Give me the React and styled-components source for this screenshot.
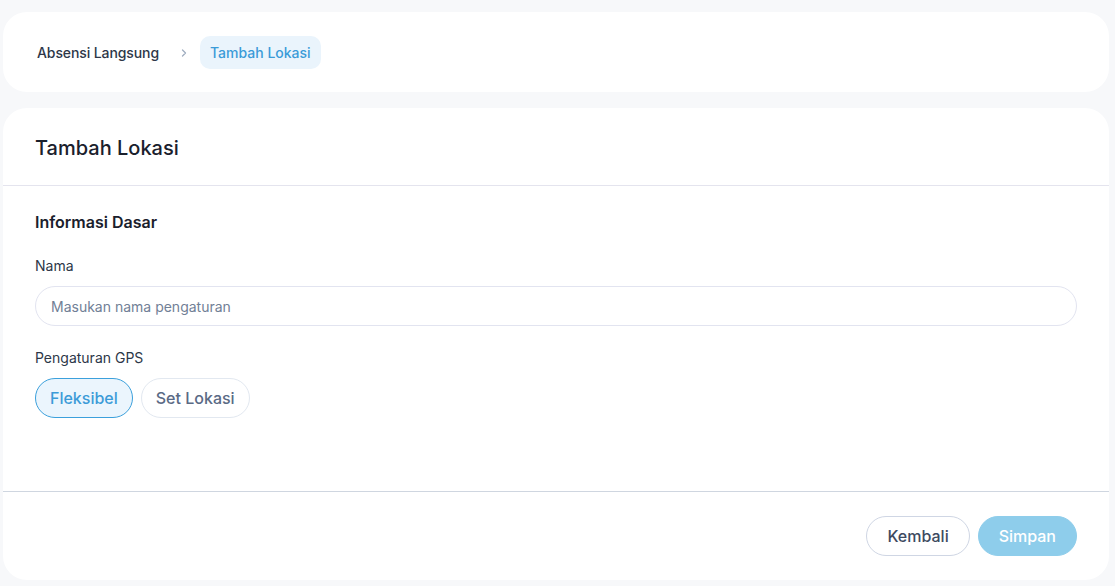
import styled, { createGlobalStyle } from "styled-components";

const GlobalStyle = createGlobalStyle`
  * { box-sizing: border-box; }
  html, body { margin: 0; padding: 0; }
  body {
    background: #f7f8fa;
    font-family: Inter, "Noto Sans", sans-serif;
    color: #1a202c;
  }
`;

export default function App() {
    return (
        <>
            <GlobalStyle />
            <Page>
                <Card>
                    <Breadcrumb>
                        <Crumb>Absensi Langsung</Crumb>
                        <Chevron viewBox="0 0 12 12">
                            <path d="M4.5 3l3 3-3 3" fill="none" stroke="#a0aec0" strokeWidth="1.3" strokeLinecap="round" strokeLinejoin="round" />
                        </Chevron>
                        <CrumbActive>Tambah Lokasi</CrumbActive>
                    </Breadcrumb>
                </Card>
                <FormCard>
                    <FormHeader>
                        <Title>Tambah Lokasi</Title>
                    </FormHeader>
                    <FormBody>
                        <SectionTitle>Informasi Dasar</SectionTitle>
                        <Field>
                            <Label>Nama</Label>
                            <Input placeholder="Masukan nama pengaturan" />
                        </Field>
                        <Field>
                            <Label>Pengaturan GPS</Label>
                            <Options>
                                <Option $active>Fleksibel</Option>
                                <Option>Set Lokasi</Option>
                            </Options>
                        </Field>
                    </FormBody>
                    <FormFooter>
                        <Button>Kembali</Button>
                        <Button $primary>Simpan</Button>
                    </FormFooter>
                </FormCard>
            </Page>
        </>
    )
}

const Page = styled.div`
    padding: 12px 6px 6px 3px;
    display: flex;
    flex-direction: column;
    gap: 16px;
`

const Card = styled.div`
    background: #ffffff;
    border-radius: 24px;
    height: 80px;
    padding: 0 34px;
    display: flex;
    align-items: center;
`

const Breadcrumb = styled.div`
    display: flex;
    align-items: center;
    gap: 10px;
    margin-top: 1px;
`

const Crumb = styled.span`
    font-size: 14px;
    font-weight: 500;
    color: #2d3748;
    letter-spacing: -0.1px;
`

const Chevron = styled.svg`
    width: 12px;
    height: 12px;
    margin-left: 9px;
`

const CrumbActive = styled.span`
    font-size: 14px;
    font-weight: 500;
    color: #3b9bd8;
    background: #eaf4fc;
    border-radius: 10px;
    padding: 7px 10px;
    line-height: 19px;
`

const FormCard = styled.div`
    background: #ffffff;
    border-radius: 24px;
    display: flex;
    flex-direction: column;
`

const FormHeader = styled.div`
    height: 78px;
    padding: 0 32px;
    display: flex;
    align-items: center;
    border-bottom: 1px solid #e4e4ee;
`

const Title = styled.h1`
    margin: 2px 0 0;
    font-size: 20px;
    font-weight: 500;
    color: #1a202c;
`

const FormBody = styled.div`
    height: 306px;
    padding: 24px 32px 0;
    display: flex;
    flex-direction: column;
    gap: 22px;
    border-bottom: 1px solid #cfd6e0;
`

const SectionTitle = styled.h2`
    margin: 0;
    font-size: 16px;
    line-height: 24px;
    font-weight: 600;
    color: #1a202c;
`

const Field = styled.div`
    display: flex;
    flex-direction: column;
    gap: 10px;
`

const Label = styled.label`
    font-size: 14px;
    line-height: 20px;
    color: #2d3748;
`

const Input = styled.input`
    width: 1042px;
    height: 40px;
    border: 1px solid #e2e4f0;
    border-radius: 20px;
    padding: 0 15px;
    font-family: inherit;
    font-size: 14px;
    color: #2d3748;
    outline: none;
    &::placeholder { color: #718096; }
`

const Options = styled.div`
    display: flex;
    gap: 8px;
`

const Option = styled.button`
    height: 40px;
    padding: 0 14px;
    border-radius: 20px;
    font-family: inherit;
    font-size: 16px;
    font-weight: 500;
    cursor: pointer;
    border: 1px solid ${p => p.$active ? "#3ba0dc" : "#e2e8f0"};
    background: ${p => p.$active ? "#ebf5fd" : "#ffffff"};
    color: ${p => p.$active ? "#3b9bd8" : "#5a6a85"};
`

const FormFooter = styled.div`
    height: 88px;
    padding: 24px 32px 0;
    display: flex;
    justify-content: flex-end;
    gap: 8px;
`

const Button = styled.button`
    height: 40px;
    padding: 0 20px;
    border-radius: 20px;
    font-family: inherit;
    font-size: 16px;
    font-weight: 500;
    cursor: pointer;
    border: 1px solid ${p => p.$primary ? "#8ecdeb" : "#cfd6e4"};
    background: ${p => p.$primary ? "#8ecdeb" : "#ffffff"};
    color: ${p => p.$primary ? "#ffffff" : "#3d4a5f"};
`
